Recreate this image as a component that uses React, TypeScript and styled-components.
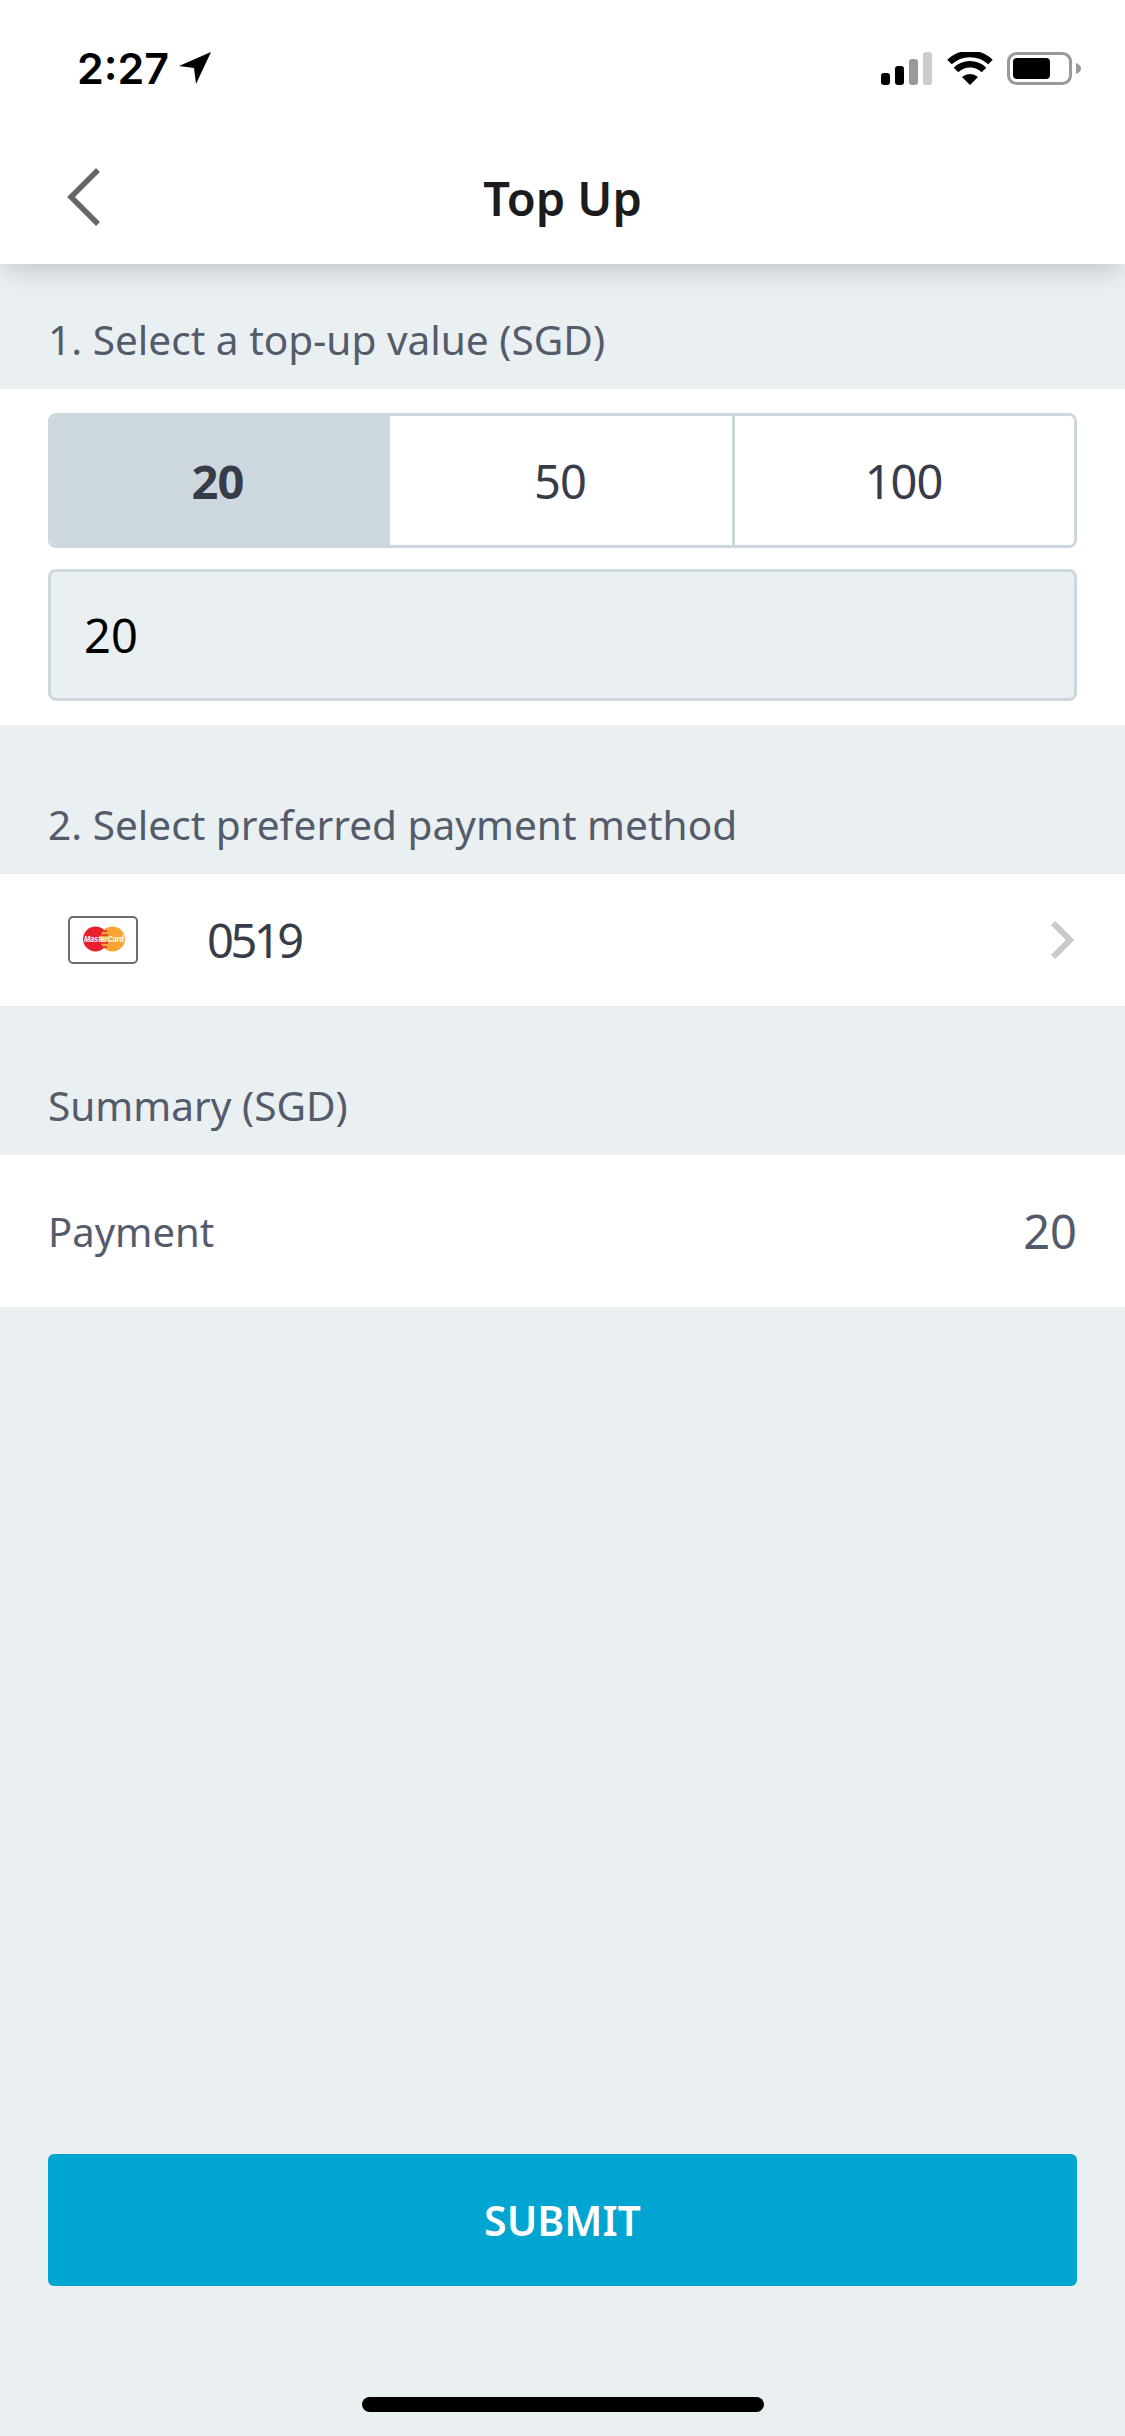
import { useState } from "react";
import styled, { createGlobalStyle } from "styled-components";

const GlobalStyle = createGlobalStyle`
  * {
    box-sizing: border-box;
  }

  html,
  body {
    margin: 0;
    padding: 0;
    background-color: #eaeff2;
    font-family: "Noto Sans", "Open Sans", sans-serif;
  }
`;

const Page = styled.div`
  display: flex;
  flex-direction: column;
  width: 1125px;
  height: 2436px;
  overflow: hidden;
  background-color: #eaeff2;
`;

const Header = styled.header`
  position: relative;
  z-index: 1;
  height: 264px;
  background-color: #fff;
  box-shadow: 0 12px 24px -6px rgba(40, 50, 60, 0.22);
`;

const StatusBar = styled.div`
  display: flex;
  align-items: center;
  justify-content: space-between;
  height: 136px;
  padding: 0 44px 0 77px;
`;

const Clock = styled.div`
  display: flex;
  align-items: center;
  gap: 10px;
  font-family: "Inter", "Liberation Sans", sans-serif;
  font-size: 43px;
  font-weight: 600;
  color: #000;
`;

const StatusIcons = styled.div`
  display: flex;
  align-items: center;
  gap: 14px;
`;

const NavBar = styled.div`
  position: relative;
  display: flex;
  align-items: center;
  justify-content: center;
  height: 128px;
`;

const BackButton = styled.button`
  position: absolute;
  left: 67px;
  top: 32px;
  display: flex;
  padding: 0;
  border: 0;
  background: none;
`;

const Title = styled.h1`
  margin: 0 0 5px;
  font-size: 47px;
  font-weight: 600;
  color: #1c1c1e;
`;

const SectionLabel = styled.div<{ $height: number }>`
  display: flex;
  align-items: flex-end;
  height: ${(p) => p.$height}px;
  padding: 0 48px 25px;
  font-size: 40.6px;
  line-height: 48px;
  color: #545b6b;
`;

const ValuePanel = styled.section`
  display: flex;
  flex-direction: column;
  gap: 21px;
  height: 336px;
  padding: 24px 48px;
  background-color: #fff;
`;

const ValueGroup = styled.div`
  display: grid;
  grid-template-columns: 339px 342px 1fr;
  height: 135px;
  overflow: hidden;
  border: 3px solid #cdd7de;
  border-radius: 8px;
`;

const ValueOption = styled.button<{ $selected?: boolean }>`
  padding: 0 ${(p) => (p.$selected ? "6px" : "2px")} 0 0;
  border: 0;
  border-left: ${(p) => (p.$selected ? "0" : "3px solid #cdd7de")};
  background-color: ${(p) => (p.$selected ? "#cdd7de" : "#fff")};
  font-family: inherit;
  font-size: 47px;
  font-weight: ${(p) => (p.$selected ? 700 : 400)};
  letter-spacing: -1px;
  color: #383c49;

  &:nth-child(2) {
    border-left: 0;
  }
`;

const AmountInput = styled.input`
  width: 100%;
  height: 132px;
  padding: 0 33px;
  border: 3px solid #cdd7de;
  border-radius: 8px;
  outline: none;
  background-color: #eaeff2;
  font-family: inherit;
  font-size: 47px;
  color: #000;
`;

const PaymentRow = styled.div`
  display: flex;
  align-items: center;
  height: 132px;
  padding: 0 50px 0 68px;
  background-color: #fff;
`;

const CardNumber = styled.span`
  flex: 1;
  margin-left: 69px;
  font-size: 47px;
  letter-spacing: -3.5px;
  color: #383c49;
`;

const SummaryRow = styled.div`
  display: flex;
  align-items: center;
  justify-content: space-between;
  height: 152px;
  padding: 0 48px;
  background-color: #fff;
  color: #545b6b;
`;

const SummaryLabel = styled.span`
  font-size: 40px;
`;

const SummaryValue = styled.span`
  font-size: 47px;
`;

const Footer = styled.footer`
  display: flex;
  flex-direction: column;
  align-items: center;
  margin-top: auto;
  padding: 0 48px 24px;
`;

const SubmitButton = styled.button`
  width: 100%;
  height: 132px;
  border: 0;
  border-radius: 6px;
  background-color: #00a5d2;
  font-family: inherit;
  font-size: 41px;
  font-weight: 600;
  color: #fff;
`;

const HomeBar = styled.div`
  width: 402px;
  height: 15px;
  margin-top: 111px;
  border-radius: 8px;
  background-color: #000;
`;

const LocationArrow = () => (
  <svg width="32" height="32" viewBox="0 0 32 32">
    <path d="M0 14 L32 0 L17 32 L15 16 Z" fill="#000" />
  </svg>
);

const SignalIcon = () => (
  <svg width="52" height="33" viewBox="0 0 52 33">
    <rect x="0" y="21" width="9" height="12" rx="3" fill="#000" />
    <rect x="14" y="14" width="9" height="19" rx="3" fill="#000" />
    <rect x="28" y="7" width="9" height="26" rx="3" fill="#999" />
    <rect x="42" y="0" width="9" height="33" rx="3" fill="#ccc" />
  </svg>
);

const WifiIcon = () => (
  <svg width="46" height="33" viewBox="0 0 46 33">
    <path d="M23 33 L15 25 A12 12 0 0 1 31 25 Z" fill="#000" />
    <path
      d="M9 18 A20 20 0 0 1 37 18"
      fill="none"
      stroke="#000"
      strokeWidth="6.5"
    />
    <path
      d="M2.5 10 A30 30 0 0 1 43.5 10"
      fill="none"
      stroke="#000"
      strokeWidth="6.5"
    />
  </svg>
);

const BatteryIcon = () => (
  <svg width="74" height="33" viewBox="0 0 74 33">
    <rect
      x="1.5"
      y="1.5"
      width="62"
      height="30"
      rx="8"
      fill="none"
      stroke="#999"
      strokeWidth="3"
    />
    <rect x="6" y="6" width="37" height="21" rx="4" fill="#000" />
    <path d="M69 11 Q74 13 74 16.5 Q74 20 69 22 Z" fill="#999" />
  </svg>
);

const BackIcon = () => (
  <svg width="34" height="58" viewBox="0 0 34 58">
    <path
      d="M31 2 L4 29 L31 56"
      fill="none"
      stroke="#666"
      strokeWidth="5.5"
    />
  </svg>
);

const MastercardIcon = () => (
  <svg width="70" height="48" viewBox="0 0 70 48">
    <rect
      x="1"
      y="1"
      width="68"
      height="46"
      rx="4"
      fill="#fff"
      stroke="#6e6e6e"
      strokeWidth="2"
    />
    <circle cx="27.5" cy="23" r="12.5" fill="#e8202e" />
    <circle cx="44.5" cy="23" r="12.5" fill="#f9a533" />
    <path
      d="M33 15 H39 M32 19 H40 M32 27 H40 M33 31 H39"
      stroke="#e8202e"
      strokeWidth="1.5"
    />
    <text
      x="36"
      y="26"
      textAnchor="middle"
      fontFamily="'Liberation Sans', sans-serif"
      fontSize="9"
      fontStyle="italic"
      fontWeight="700"
      fill="#fff"
      textLength="40"
      lengthAdjust="spacingAndGlyphs"
    >
      MasterCard
    </text>
  </svg>
);

const ChevronIcon = () => (
  <svg width="26" height="38" viewBox="0 0 26 38">
    <path
      d="M4 2 L21 19 L4 36"
      fill="none"
      stroke="#c8c9cc"
      strokeWidth="6"
    />
  </svg>
);

const VALUES = [20, 50, 100];

export default function App() {
  const [amount, setAmount] = useState(20);

  return (
    <Page>
      <GlobalStyle />

      <Header>
        <StatusBar>
          <Clock>
            2:27
            <LocationArrow />
          </Clock>
          <StatusIcons>
            <SignalIcon />
            <WifiIcon />
            <BatteryIcon />
          </StatusIcons>
        </StatusBar>
        <NavBar>
          <BackButton aria-label="Back">
            <BackIcon />
          </BackButton>
          <Title>Top Up</Title>
        </NavBar>
      </Header>

      <SectionLabel $height={125}>1. Select a top-up value (SGD)</SectionLabel>
      <ValuePanel>
        <ValueGroup>
          {VALUES.map((value) => (
            <ValueOption
              key={value}
              $selected={value === amount}
              onClick={() => setAmount(value)}
            >
              {value}
            </ValueOption>
          ))}
        </ValueGroup>
        <AmountInput
          value={amount}
          onChange={(e) => setAmount(Number(e.target.value))}
        />
      </ValuePanel>

      <SectionLabel $height={149}>
        2. Select preferred payment method
      </SectionLabel>
      <PaymentRow>
        <MastercardIcon />
        <CardNumber>0519</CardNumber>
        <ChevronIcon />
      </PaymentRow>

      <SectionLabel $height={149}>Summary (SGD)</SectionLabel>
      <SummaryRow>
        <SummaryLabel>Payment</SummaryLabel>
        <SummaryValue>{amount}</SummaryValue>
      </SummaryRow>

      <Footer>
        <SubmitButton>SUBMIT</SubmitButton>
        <HomeBar />
      </Footer>
    </Page>
  );
}
